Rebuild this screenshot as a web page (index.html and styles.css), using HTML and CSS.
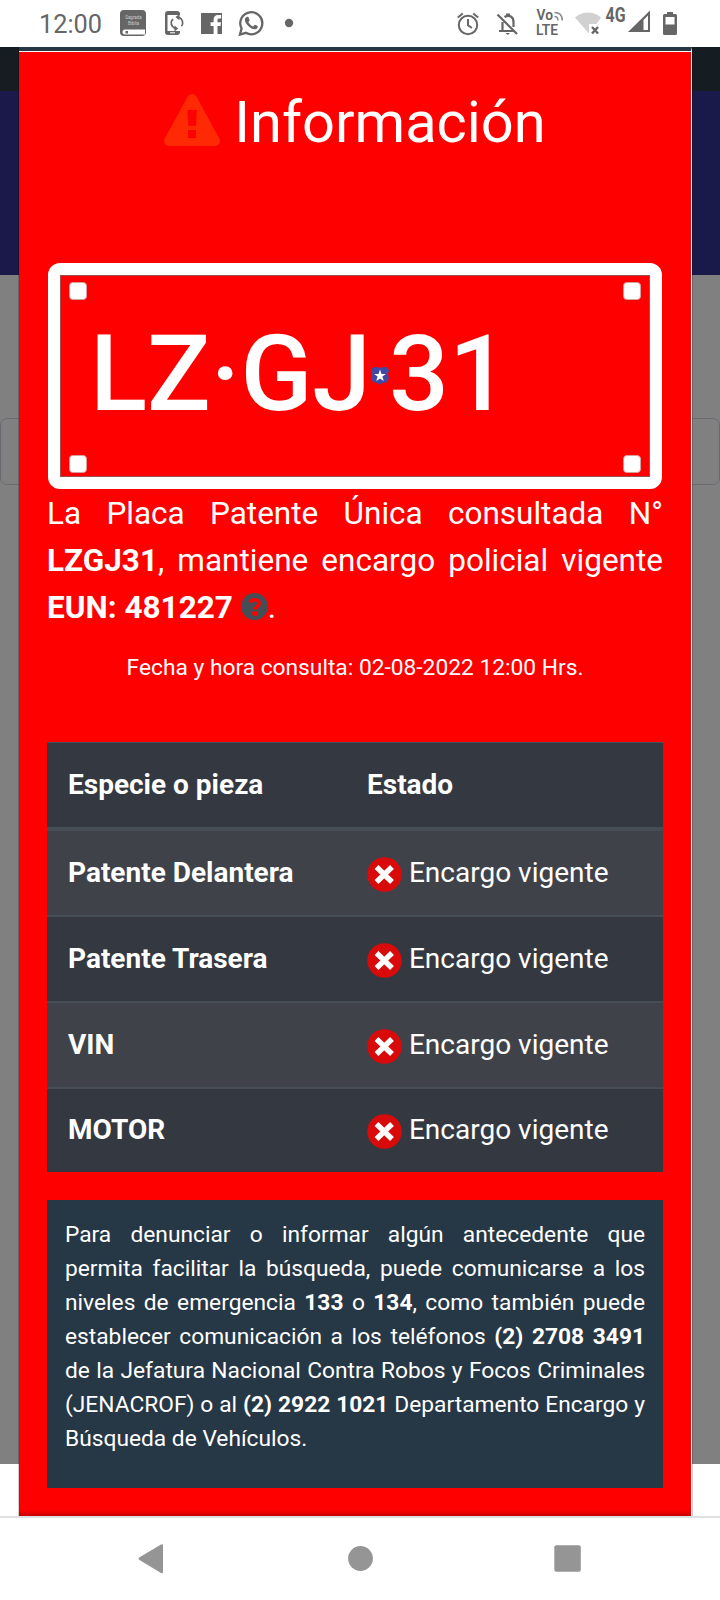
FILE: index.html
```
<!DOCTYPE html>
<html lang="es">
<head>
  <meta charset="UTF-8" />
  <meta name="viewport" content="width=device-width, initial-scale=1.0" />
  <title>Información</title>
  <link rel="stylesheet" href="styles.css">
</head>
<body>
  <svg class="defs" width="0" height="0">
    <symbol id="icon-x" viewBox="0 0 35 35">
      <circle cx="17.5" cy="17.5" r="17.3" fill="#d90a0a" />
      <path d="M9.500 10L25 25M25 10L9.500 25" stroke="#fff" stroke-width="5.4" />
    </symbol>
  </svg>

  <header class="status-bar">
    <span class="clock">12:00</span>
    <svg class="status-left" width="200" height="47" viewBox="110 0 200 47" fill="#666">
      <!-- biblia -->
      <rect x="120" y="10" width="26" height="26" rx="4" />
      <path d="M125 29.5H145V34.5H125a2.5 2.5 0 0 1 0-5z" fill="#fff" />
      <path d="M125.500 31h2.500v2.500h-2.500z" />
      <text x="133.500" y="19" class="book-text">Sagrada</text>
      <text x="133.500" y="24.500" class="book-text">Biblia</text>
      <!-- telefono -->
      <path d="M168 11h9a3 3 0 0 1 3 3v1h-12.500v16H180v1a3 3 0 0 1-3 3h-9a3 3 0 0 1-3-3V14a3 3 0 0 1 3-3z" />
      <path d="M170 32.800h5" stroke="#fff" />
      <path d="M179 17.300a5.800 5.800 0 0 1 2.500 8.900M175 28.500a5.800 5.800 0 0 1-2-9.500" fill="none" stroke="#666" stroke-width="1.700" />
      <path d="M179.500 14v6.200l-4-3.100zM174.500 25.500v6l3.700-3z" />
      <!-- facebook -->
      <path d="M201 13h21v21h-4.500v-8h3l.5-3.700h-3.500v-2.200c0-1.200.6-1.700 1.700-1.700h1.900V15h-2.900c-3 0-4.600 1.700-4.600 4.600v2.700h-3V26h3v8H201z" />
      <!-- whatsapp -->
      <path d="M240 34.500l1.600-6.100a11 11 0 1 1 4.300 4.400z" fill="none" stroke="#666" stroke-width="2.300" />
      <path d="M246.300 17.300c.9-.8 1.900-.6 2.300.3l1 2.300c.2.600-.9 1.800-1.200 2.300 1.100 2 2.600 3.300 4.600 4.200.8-.6 1.500-1.900 2.100-1.700l2.500 1.300c.7.400-.1 2.400-1.200 2.900-2 1-4.600.2-7.300-2.100-2.800-2.400-4.600-5.800-4.200-7.700.1-.8.700-1.400 1.400-1.800z" />
      <circle cx="289" cy="23" r="4.200" />
    </svg>
    <svg class="status-right" width="230" height="47" viewBox="450 0 230 47" fill="#666">
      <!-- alarma -->
      <g fill="none" stroke="#666" stroke-width="2">
        <circle cx="468" cy="25" r="9.200" />
        <path d="M468 19v6.200l4 2.800M457.800 17.500l5-4M478.200 17.500l-5-4" />
      </g>
      <!-- campana -->
      <g fill="none" stroke="#666" stroke-width="2.200">
        <path d="M497.500 14.500L517 34M499 31h15M502.500 31v-9M504.500 17c5-3 9 0 9 5v5" />
      </g>
      <path d="M506 13.500h4v3h-4zM505.500 33h4.500l-2.200 2z" />
      <text x="536.500" y="19.500" class="volte">Vo</text>
      <text x="536" y="34.700" class="volte">LTE</text>
      <path d="M554.500 16.500c2.500 0 3.500 1.500 3.500 4M554.500 12.500c5 0 7.800 3 7.800 8" fill="none" stroke="#888" stroke-width="1.500" />
      <!-- wifi -->
      <path d="M575 17.500c7.500-6.700 18.500-6.700 26 0l-4.500 6.500H589v9.500z" fill="#d1d1d1" />
      <path d="M592 27l6 6.500M598 27l-6 6.500" stroke="#666" stroke-width="2.400" />
      <text x="605.500" y="22" class="net" textLength="20" lengthAdjust="spacingAndGlyphs">4G</text>
      <!-- senal -->
      <path d="M628 32L650 10.500V32z" />
      <path d="M643.500 20l4.500-4.500V30h-4.500z" fill="#fff" />
      <!-- bateria -->
      <path d="M667 12h6v2h2.500a1.500 1.500 0 0 1 1.500 1.500v18a1.500 1.500 0 0 1-1.500 1.500h-11a1.500 1.500 0 0 1-1.500-1.500v-18a1.500 1.500 0 0 1 1.500-1.500h2.500z" />
      <path d="M665.500 17h9v7.500h-9z" fill="#fff" />
    </svg>
  </header>

  <main class="page">
    <div class="backdrop">
      <div class="navbar"></div>
      <div class="banner"></div>
      <div class="content">
        <div class="field"></div>
      </div>
      <div class="blank"></div>
    </div>

    <section class="modal">
      <h1 class="title">
        <svg width="56" height="52" viewBox="0 0 56 52">
          <path fill-rule="evenodd" fill="#ff2a04" d="M23.800 2.500a5 5 0 0 1 8.600 0L55.300 44.500a5 5 0 0 1-4.300 7.500H5a5 5 0 0 1-4.300-7.500zM23.500 16l.8 16h7.700l.8-16zM24 36v8h8v-8z" />
        </svg>
        <span>Información</span>
      </h1>

      <div class="plate">
        <div class="bolts"><i></i><i></i></div>
        <div class="plate-number">
          <span>LZ·GJ</span>
          <svg width="18" height="18" viewBox="0 0 18 18">
            <path fill="#4149a5" d="M2 0.500L4.500 0 9 .8 13.500 0 16 .5 18 3l-1 4 .8 4.500-1.800 3.500-4.500 1L9 18l-2.500-2-4.500-1L.2 11.500 1 7 0 3z" />
            <path fill="#fff" d="M9 2.500l1.500 4.400h4.400l-3.500 2.700 1.300 4.400L9 11.400 5.300 14l1.300-4.400-3.500-2.700h4.400z" />
          </svg>
          <span>31</span>
        </div>
        <div class="bolts"><i></i><i></i></div>
      </div>

      <p class="message">La Placa Patente Única consultada N° <b>LZGJ31</b>, mantiene encargo policial vigente <b>EUN: 481227</b>
        <svg class="help" width="27" height="27" viewBox="0 0 27 27">
          <circle cx="13.500" cy="13.500" r="13.400" fill="#454d55" />
          <path d="M9 9.800C10 7.500 11.700 6.700 13.800 6.700c2.600 0 4.500 1.500 4.500 3.600 0 3.400-4.300 3-4.300 6.200" fill="none" stroke="#f00" stroke-width="3.400" />
          <rect x="11.300" y="18.200" width="5" height="4.500" rx="1" fill="#f00" />
        </svg>.</p>

      <p class="date">Fecha y hora consulta: 02-08-2022 12:00 Hrs.</p>

      <table class="pieces">
        <thead>
          <tr><th>Especie o pieza</th><th>Estado</th></tr>
        </thead>
        <tbody>
          <tr><th>Patente Delantera</th><td><svg><use href="#icon-x" /></svg> Encargo vigente</td></tr>
          <tr><th>Patente Trasera</th><td><svg><use href="#icon-x" /></svg> Encargo vigente</td></tr>
          <tr><th>VIN</th><td><svg><use href="#icon-x" /></svg> Encargo vigente</td></tr>
          <tr><th>MOTOR</th><td><svg><use href="#icon-x" /></svg> Encargo vigente</td></tr>
        </tbody>
      </table>

      <p class="notice">Para denunciar o informar algún antecedente que permita facilitar la búsqueda, puede comunicarse a los niveles de emergencia <b>133</b> o <b>134</b>, como también puede establecer comunicación a los teléfonos <b>(2) 2708 3491</b> de la Jefatura Nacional Contra Robos y Focos Criminales (JENACROF) o al <b>(2) 2922 1021</b> Departamento Encargo y Búsqueda de Vehículos.</p>
    </section>
  </main>

  <footer class="nav-bar">
    <svg width="720" height="82" viewBox="0 0 720 82" fill="#959595">
      <path d="M139.500 39.200L161 26.500q2-1 2 1v26.500q0 2-2 1L139.500 42q-2-1.400 0-2.800z" />
      <circle cx="360.500" cy="40.500" r="12.400" />
      <rect x="554.300" y="27.300" width="26.500" height="26.500" rx="2" />
    </svg>
  </footer>
</body>
</html>
```

FILE: styles.css
```
* {
  box-sizing: border-box;
}
body {
  margin: 0;
  height: 1600px;
  overflow: hidden;
  display: flex;
  flex-direction: column;
  font-family: Roboto, sans-serif;
  background-color: white;
  color: white;
}
.defs {
  position: absolute;
}
.status-bar {
  height: 47px;
  flex: none;
  display: flex;
  color: #666;
}
.clock {
  width: 110px;
  padding-left: 39px;
  font-size: 25.3px;
  line-height: 49px;
}
.status-right {
  margin-left: 140px;
}
.book-text {
  font-size: 4.5px;
  fill: #ccc;
  text-anchor: middle;
}
.volte {
  font-size: 13.8px;
  font-weight: 600;
}
.net {
  font-size: 19.5px;
  font-weight: 700;
}
.page {
  height: 1469px;
  flex: none;
  display: grid;
  overflow: hidden;
}
.backdrop, .modal {
  grid-area: 1 / 1;
}
.backdrop {
  display: flex;
  flex-direction: column;
}
.navbar {
  height: 44px;
  background-color: #151c22;
}
.banner {
  height: 184px;
  background-color: #19194a;
}
.content {
  height: 1189px;
  padding-top: 143px;
  background-color: #808080;
}
.field {
  height: 67px;
  border: 1px solid #676b70;
  border-radius: 7px;
}
.blank {
  flex: 1;
}
.modal {
  width: 673px;
  margin-left: 19px;
  padding: 0 28px;
  background-color: red;
  border-top: 4px solid #263745;
  border-right: 1px solid white;
  box-shadow: inset 0 1px white, inset 0 -5px 5px -3px rgba(0, 0, 0, 0.3), 0 0 0 1px rgba(0, 0, 0, 0.2);
}
.title {
  height: 212px;
  margin: 0;
  padding: 37px 0 0;
  display: flex;
  justify-content: center;
  align-items: flex-start;
  gap: 14px;
  font-size: 57.75px;
  font-weight: 400;
  line-height: 68px;
}
.title svg {
  margin-top: 6px;
}
.plate {
  width: 614px;
  height: 226px;
  margin-left: 1px;
  padding: 7px 9px 4px;
  display: flex;
  flex-direction: column;
  justify-content: space-between;
  border: 12px solid white;
  border-radius: 12px;
  box-shadow: inset 0 0 0 1px #a05050;
}
.bolts {
  display: flex;
  justify-content: space-between;
}
.bolts i {
  width: 18px;
  height: 18px;
  background-color: white;
  border: 1px solid #d9a0a0;
  border-radius: 4px;
}
.plate-number {
  display: flex;
  align-items: center;
  margin-top: -7px;
  padding-left: 21px;
  font-size: 105.5px;
  font-weight: 500;
  line-height: 124px;
}
.plate-number svg {
  margin-top: 4px;
}
.message {
  margin: 1px 0 0;
  font-size: 31.5px;
  line-height: 47px;
  text-align: justify;
}
.help {
  vertical-align: -2px;
}
.date {
  margin: 20px 0 0;
  font-size: 22.75px;
  line-height: 34px;
  text-align: center;
}
.pieces {
  width: 616px;
  margin-top: 57px;
  border-spacing: 0;
  table-layout: fixed;
  background-color: #343840;
  font-size: 28px;
  line-height: 42px;
  text-align: left;
}
.pieces th, .pieces td {
  height: 86px;
  padding: 20px 21px 21px;
  border-top: 2px solid #454d55;
}
.pieces th:first-child {
  width: 299px;
}
.pieces thead th {
  height: 85px;
  border-top-width: 1px;
}
.pieces tbody tr:first-child > * {
  height: 88px;
  border-top-width: 4px;
}
.pieces tbody tr:last-child > * {
  height: 85px;
}
.pieces tbody tr:nth-child(odd) {
  background-color: #3f4349;
}
.pieces td svg {
  width: 35px;
  height: 35px;
  vertical-align: -10px;
}
.notice {
  height: 288px;
  margin: 28px 0 0;
  padding: 18px;
  background-color: #263745;
  font-size: 22.75px;
  line-height: 34px;
  text-align: justify;
}
.nav-bar {
  height: 84px;
  flex: none;
  border-top: 2px solid #e0e0e0;
}
.nav-bar svg {
  display: block;
}
```
